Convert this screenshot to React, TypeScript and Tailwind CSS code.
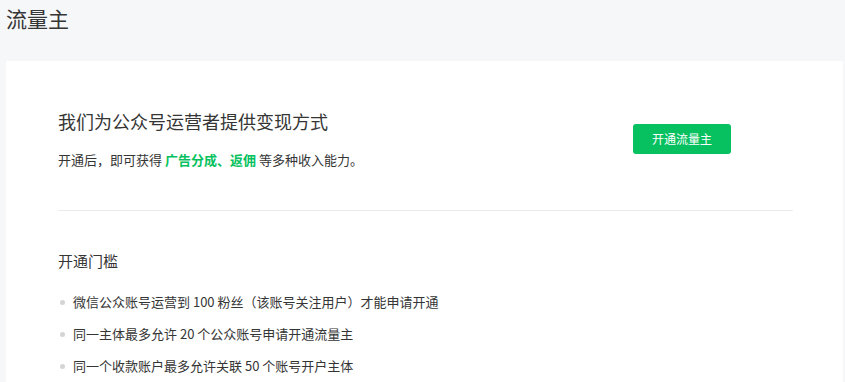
import React from "react";

const rules = [
  "微信公众账号运营到 100 粉丝（该账号关注用户）才能申请开通",
  "同一主体最多允许 20 个公众账号申请开通流量主",
  "同一个收款账户最多允许关联 50 个账号开户主体",
];

const App = () => {
  return (
    <div
      className="h-[382px] w-[845px] overflow-hidden bg-[#f6f7f9]"
      style={{ fontFamily: '"Noto Sans CJK SC", "Noto Sans", sans-serif' }}
    >
      <h1 className="pl-[6px] pt-[3px] text-[21px] leading-[30px] font-normal text-[#353535]">
        流量主
      </h1>

      <div className="mt-[28px] ml-[6px] mr-[2px] h-[400px] bg-white pl-[52px] pr-[50px]">
        {/* Intro */}
        <div className="flex items-center pt-[47px]">
          <div className="flex-1">
            <h2 className="text-[18px] leading-[26px] font-normal text-[#353535]">
              我们为公众号运营者提供变现方式
            </h2>
            <p className="mt-[16px] text-[13px] leading-[20px] text-[#353535]">
              开通后，即可获得{" "}
              <span className="font-bold text-[#07c160]">广告分成、返佣</span>{" "}
              等多种收入能力。
            </p>
          </div>
          <button className="mr-[62px] h-[30px] w-[98px] rounded-[3px] bg-[#07c160] text-[12px] text-white">
            开通流量主
          </button>
        </div>

        <div className="mt-[40px] h-px bg-[#ececec]" />

        {/* Requirements */}
        <h3 className="mt-[39px] text-[15px] leading-[22px] font-normal text-[#353535]">
          开通门槛
        </h3>
        <ul className="mt-[20px]">
          {rules.map((rule, i) => (
            <li
              key={i}
              className="mb-[12px] flex items-center text-[13px] leading-[20px] text-[#353535]"
            >
              <span className="mr-[8px] ml-[2px] h-[5px] w-[5px] rounded-full bg-[#d4d4d4]" />
              {rule}
            </li>
          ))}
        </ul>
      </div>
    </div>
  );
};

export default App;
